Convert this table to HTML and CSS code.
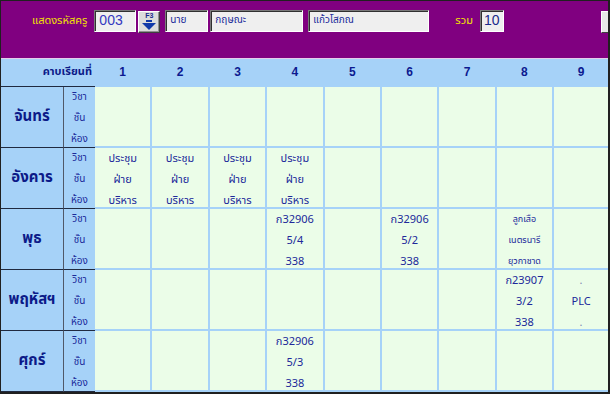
FILE: index.html
```html
<!DOCTYPE html>
<html>
<head>
<meta charset="utf-8">
<link rel="stylesheet" href="styles.css">
</head>
<body>
<div class="win">
  <div class="topbar">
    <span class="lbl lbl-code">แสดงรหัสครู</span>
    <div class="inp inp-code">003</div>
    <div class="btn-f3">
      <span class="f3txt">F3</span>
      <svg width="16" height="11" viewBox="0 0 16 11"><rect x="5" y="0" width="6" height="2" fill="#1038a8"/><polygon points="1,3 15,3 8,10" fill="#1038a8"/></svg>
    </div>
    <div class="inp inp-pre">นาย</div>
    <div class="inp inp-fn">กฤษณะ</div>
    <div class="inp inp-ln">แก้วโสภณ</div>
    <span class="lbl lbl-sum">รวม</span>
    <div class="inp inp-sum">10</div>
    <div class="side-btn"></div>
  </div>
  <div class="sep"></div>
  <div class="table">
    <div class="row head">
      <div class="lab">คาบเรียนที่</div>
      <div class="cells nums">
        <div>1</div><div>2</div><div>3</div><div>4</div><div>5</div><div>6</div><div>7</div><div>8</div><div>9</div>
      </div>
    </div>
    <div class="row">
      <div class="day">จันทร์</div>
      <div class="sub"><span>วิชา</span><span>ชั้น</span><span>ห้อง</span></div>
      <div class="cells">
        <div class="c"></div><div class="c"></div><div class="c"></div><div class="c"></div><div class="c"></div><div class="c"></div><div class="c"></div><div class="c"></div><div class="c"></div>
      </div>
    </div>
    <div class="row">
      <div class="day">อังคาร</div>
      <div class="sub"><span>วิชา</span><span>ชั้น</span><span>ห้อง</span></div>
      <div class="cells">
        <div class="c"><span>ประชุม</span><span>ฝ่าย</span><span>บริหาร</span></div>
        <div class="c"><span>ประชุม</span><span>ฝ่าย</span><span>บริหาร</span></div>
        <div class="c"><span>ประชุม</span><span>ฝ่าย</span><span>บริหาร</span></div>
        <div class="c"><span>ประชุม</span><span>ฝ่าย</span><span>บริหาร</span></div>
        <div class="c"></div><div class="c"></div><div class="c"></div><div class="c"></div><div class="c"></div>
      </div>
    </div>
    <div class="row">
      <div class="day">พุธ</div>
      <div class="sub"><span>วิชา</span><span>ชั้น</span><span>ห้อง</span></div>
      <div class="cells">
        <div class="c"></div><div class="c"></div><div class="c"></div>
        <div class="c"><span>ก32906</span><span>5/4</span><span>338</span></div>
        <div class="c"></div>
        <div class="c"><span>ก32906</span><span>5/2</span><span>338</span></div>
        <div class="c"></div>
        <div class="c small"><span>ลูกเสือ</span><span>เนตรนารี</span><span>ยุวกาชาด</span></div>
        <div class="c"></div>
      </div>
    </div>
    <div class="row">
      <div class="day">พฤหัสฯ</div>
      <div class="sub"><span>วิชา</span><span>ชั้น</span><span>ห้อง</span></div>
      <div class="cells">
        <div class="c"></div><div class="c"></div><div class="c"></div><div class="c"></div><div class="c"></div><div class="c"></div><div class="c"></div>
        <div class="c"><span>ก23907</span><span>3/2</span><span>338</span></div>
        <div class="c"><span class="dot">.</span><span>PLC</span><span class="dot">.</span></div>
      </div>
    </div>
    <div class="row">
      <div class="day">ศุกร์</div>
      <div class="sub"><span>วิชา</span><span>ชั้น</span><span>ห้อง</span></div>
      <div class="cells">
        <div class="c"></div><div class="c"></div><div class="c"></div>
        <div class="c"><span>ก32906</span><span>5/3</span><span>338</span></div>
        <div class="c"></div><div class="c"></div><div class="c"></div><div class="c"></div><div class="c"></div>
      </div>
    </div>
  </div>
</div>
</body>
</html>
```

FILE: styles.css
```css
html, body {
  margin: 0;
  padding: 0;
  background: #ffffff;
}
body {
  font-family: Tahoma, "Noto Sans Thai", "Noto Sans", "DejaVu Sans", sans-serif;
}
.win {
  width: 610px;
  height: 394px;
  box-sizing: border-box;
  border-top: 1px solid #202020;
  border-left: 1px solid #202020;
  border-right: 2px solid #202020;
  border-bottom: 2px solid #202020;
  overflow: hidden;
  background: #a6d2f8;
}
.topbar {
  height: 57px;
  box-sizing: border-box;
  background: #800080;
  display: flex;
  align-items: flex-start;
  padding-top: 9px;
}
.lbl {
  color: #f4e400;
  font-size: 11px;
  line-height: 22px;
}
.lbl-code { margin-left: 31px; }
.lbl-sum { margin-left: 26px; }
.inp {
  box-sizing: border-box;
  height: 22px;
  background: #efefef;
  border: 1px solid;
  border-color: #7a7a7a #ffffff #ffffff #7a7a7a;
  box-shadow: inset 1px 1px 0 #303030;
  color: #1a2a9a;
  font-size: 10px;
  line-height: 19px;
  padding-left: 4px;
  white-space: nowrap;
  overflow: hidden;
}
.inp-code {
  margin-left: 7px;
  width: 42px;
  font-size: 14px;
  color: #3438c0;
  font-family: "Liberation Sans", Arial, sans-serif;
}
.btn-f3 {
  box-sizing: border-box;
  margin-left: 2px;
  margin-top: 1px;
  width: 22px;
  height: 22px;
  background: #dcdcdc;
  border: 1px solid;
  border-color: #ffffff #404040 #404040 #ffffff;
  box-shadow: inset -1px -1px 0 #909090;
  display: flex;
  flex-direction: column;
  align-items: center;
}
.f3txt {
  font-family: "Liberation Sans", Arial, sans-serif;
  font-size: 7px;
  line-height: 8px;
  color: #1a2a8a;
  font-weight: bold;
}
.inp-pre { margin-left: 5px; width: 43px; }
.inp-fn { margin-left: 2px; width: 93px; }
.inp-ln { margin-left: 5px; width: 121px; }
.inp-sum {
  margin-left: 7px;
  width: 24px;
  font-size: 14px;
  color: #1a2a8a;
  font-family: "Liberation Sans", Arial, sans-serif;
  padding-left: 3px;
}
.side-btn {
  margin-left: auto;
  margin-top: 1px;
  width: 7px;
  height: 22px;
  box-sizing: border-box;
  background: #e8e8e8;
  border-left: 1px solid #ffffff;
  border-top: 1px solid #ffffff;
  border-bottom: 1px solid #404040;
}
.sep {
  height: 1px;
  background: #e4cdea;
}
.table {
  display: flex;
  flex-direction: column;
}
.row {
  display: flex;
  height: 61px;
  flex: none;
}
.row.head {
  height: 28px;
}
.lab {
  width: 94px;
  height: 28px;
  box-sizing: border-box;
  border-bottom: 1px solid #202a40;
  text-align: right;
  padding-right: 3px;
  font-size: 11px;
  font-weight: bold;
  color: #0c1a88;
  line-height: 26px;
}
.cells {
  flex: 1;
  display: grid;
  grid-template-columns: repeat(8, 55.4px) 1fr;
  grid-template-rows: 59px;
  column-gap: 2px;
  padding-bottom: 2px;
  background: #a6d2f8;
}
.nums {
  grid-template-rows: 28px;
  padding-bottom: 0;
}
.nums div {
  text-align: center;
  font-family: "Liberation Sans Narrow", "Liberation Sans", Arial, sans-serif;
  font-weight: bold;
  font-size: 12px;
  color: #0c1a90;
  line-height: 26px;
}
.day {
  width: 63px;
  height: 61px;
  box-sizing: border-box;
  border-right: 1px solid #505868;
  border-bottom: 1px solid #202a40;
  display: flex;
  align-items: center;
  justify-content: center;
  font-size: 15px;
  font-weight: bold;
  color: #0c1a88;
  padding-bottom: 2px;
}
.sub {
  width: 31px;
  height: 61px;
  box-sizing: border-box;
  border-bottom: 1px solid #202a40;
  display: flex;
  flex-direction: column;
  align-items: center;
  font-size: 10px;
  color: #1a2a9a;
  line-height: 21px;
}
.c {
  background: #ebfde8;
  display: flex;
  flex-direction: column;
  align-items: center;
  font-size: 11px;
  line-height: 21px;
  color: #20289a;
  white-space: nowrap;
  min-height: 0;
}
.c.small {
  font-size: 9px;
}
.c .dot {
  color: #8088b0;
}
```
